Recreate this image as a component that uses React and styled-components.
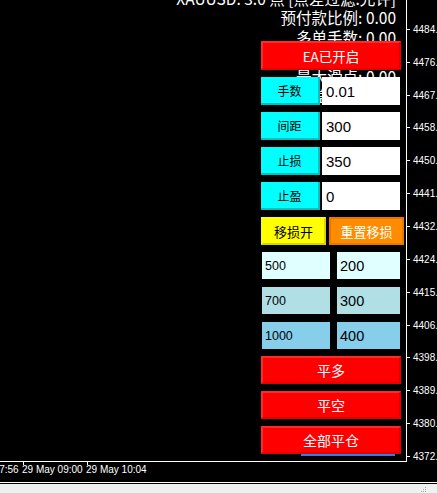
import React from "react";
import styled, { createGlobalStyle } from "styled-components";

const GlobalStyle = createGlobalStyle`
  html, body { margin: 0; padding: 0; background: #000; }
  body {
    width: 437px; height: 493px; overflow: hidden;
    font-family: "Liberation Sans", Arial, sans-serif;
  }
  * { box-sizing: border-box; }
`;

const Screen = styled.div`
  width: 437px;
  height: 493px;
  display: flex;
  flex-direction: column;
  background: #000;
`;

const Chart = styled.div`
  height: 482px;
  display: grid;
  grid-template-columns: 407px 30px;
  grid-template-rows: 462px 20px;
`;

const Plot = styled.div`
  position: relative;
  overflow: hidden;
  border-right: 1px solid #fff;
  border-bottom: 1px solid #fff;
`;

const Info = styled.div`
  display: flex;
  flex-direction: column;
  align-items: flex-end;
  margin-top: -11.5px;
  padding-right: 10px;
  font-family: "Noto Sans CJK SC", sans-serif;
  font-size: 15.5px;
  line-height: 19.5px;
  color: #fff;
  white-space: nowrap;
`;

const PriceLine = styled.div`
  position: absolute;
  left: 301px;
  top: 454px;
  width: 94px;
  height: 2px;
  background: #2a80f0;
`;

const Panel = styled.div`
  position: absolute;
  left: 261px;
  top: 41px;
  width: 143px;
  display: flex;
  flex-direction: column;
  gap: 7px;
  font-family: "Noto Sans CJK SC", sans-serif;
`;

const Button = styled.div`
  flex: none;
  width: ${(p) => p.$w || 140}px;
  height: ${(p) => p.$h || 28}px;
  background: ${(p) => p.$bg};
  color: ${(p) => p.$fg || "#fff"};
  font-size: ${(p) => p.$fs || 14}px;
  display: flex;
  align-items: center;
  justify-content: center;
  border-style: solid;
  border-width: 2px;
  border-color: ${(p) => p.$lt} ${(p) => p.$dk} ${(p) => p.$dk} ${(p) => p.$lt};
  white-space: nowrap;
`;

const FieldRow = styled.div`
  display: flex;
  gap: 2px;
  height: 28px;
`;

const FieldLabel = styled.div`
  width: 59px;
  background: #00ffff;
  border-right: 2px solid #00c2c2;
  border-bottom: 2px solid #00c2c2;
  color: #000;
  font-size: 12px;
  display: flex;
  align-items: center;
  justify-content: center;
`;

const FieldInput = styled.div`
  width: 78px;
  background: #fff;
  color: #000;
  font-family: "Liberation Sans", Arial, sans-serif;
  font-size: 15px;
  padding-left: 4px;
  display: flex;
  align-items: center;
`;

const ButtonRow = styled.div`
  display: flex;
  gap: 3px;
`;

const PresetGroup = styled.div`
  display: flex;
  flex-direction: column;
  gap: 8px;
  padding-left: 1px;
`;

const PresetRow = styled.div`
  display: flex;
  gap: 7px;
  height: 27px;
`;

const Preset = styled.div`
  width: ${(p) => p.$w}px;
  background: ${(p) => p.$bg};
  color: #000;
  font-family: "Liberation Sans", Arial, sans-serif;
  font-size: ${(p) => p.$fs}px;
  padding-left: 3px;
  display: flex;
  align-items: center;
`;

const CloseGroup = styled.div`
  display: flex;
  flex-direction: column;
  gap: 7px;
`;

const PriceAxis = styled.div`
  grid-row: 1 / 3;
  grid-column: 2;
  display: flex;
  flex-direction: column;
  padding-top: 12.9px;
  overflow: hidden;
`;

const PriceTick = styled.div`
  flex: none;
  height: 32.87px;
  display: flex;
  align-items: center;
  gap: 3px;
  font-size: 10px;
  color: #fff;
  white-space: nowrap;
  &::before {
    content: "";
    flex: none;
    width: 3px;
    height: 1px;
    background: #fff;
  }
`;

const TimeAxis = styled.div`
  grid-row: 2;
  grid-column: 1;
  display: flex;
  overflow: hidden;
  padding-top: 2px;
`;

const TimeItem = styled.div`
  flex: none;
  width: 64px;
  position: relative;
  font-size: 10px;
  line-height: 12px;
  color: #fff;
  white-space: nowrap;
  &:first-child { margin-left: -42px; }
  &::before {
    content: "";
    position: absolute;
    left: 1px;
    top: -2px;
    width: 1px;
    height: 3px;
    background: #fff;
  }
`;

const Divider = styled.div`
  height: 2px;
  border-top: 1px solid #fff;
  background: #000;
`;

const StatusBar = styled.div`
  flex: 1;
  background: #f0f0f0;
  display: flex;
  justify-content: flex-end;
  align-items: flex-end;
  padding-right: 10px;
`;

const Grip = () => (
  <svg width="6" height="6" viewBox="0 0 6 6">
    <rect x="4" y="0" width="1" height="1" fill="#a8a8a8" />
    <rect x="2" y="2" width="1" height="1" fill="#a8a8a8" />
    <rect x="4" y="2" width="1" height="1" fill="#a8a8a8" />
    <rect x="0" y="4" width="1" height="1" fill="#a8a8a8" />
    <rect x="2" y="4" width="1" height="1" fill="#a8a8a8" />
    <rect x="4" y="4" width="1" height="1" fill="#a8a8a8" />
  </svg>
);

const infoLines = [
  "XAUUSD: 3.0 点 [点差过滤:允许]",
  "预付款比例: 0.00",
  "多单手数: 0.00",
  "空单手数: 0.00",
  "最大滑点: 0.00",
  "点差限制: 0.00",
];

const fields = [
  ["手数", "0.01"],
  ["间距", "300"],
  ["止损", "350"],
  ["止盈", "0"],
];

const presets = [
  ["500", "200", "#e0ffff"],
  ["700", "300", "#b0e0e6"],
  ["1000", "400", "#87ceeb"],
];

const prices = [
  "4484.8", "4476.3", "4467.6", "4458.8", "4450.3", "4441.6", "4432.8",
  "4424.3", "4415.6", "4406.8", "4398.3", "4389.6", "4380.8", "4372.3",
];

const times = ["29 May 07:56", "29 May 09:00", "29 May 10:04"];

const red = { $bg: "#ff0000", $lt: "#ff2a2a", $dk: "#e60000" };

export default function App() {
  return (
    <>
      <GlobalStyle />
      <Screen>
        <Chart>
          <Plot>
            <Info>
              {infoLines.map((l) => (
                <div key={l}>{l}</div>
              ))}
            </Info>
            <PriceLine />
            <Panel>
              <Button {...red} $h={29} $fs={13.5}>EA已开启</Button>
              {fields.map(([k, v]) => (
                <FieldRow key={k}>
                  <FieldLabel>{k}</FieldLabel>
                  <FieldInput>{v}</FieldInput>
                </FieldRow>
              ))}
              <ButtonRow>
                <Button $w={65} $bg="#ffff00" $lt="#ffff00" $dk="#d4d400" $fg="#000" $fs={13}>
                  移损开
                </Button>
                <Button $w={75} $bg="#ff8c00" $lt="#e87800" $dk="#e87800" $fs={13}>
                  重置移损
                </Button>
              </ButtonRow>
              <PresetGroup>
                {presets.map(([a, b, bg]) => (
                  <PresetRow key={a}>
                    <Preset $w={68} $bg={bg} $fs={12.5}>{a}</Preset>
                    <Preset $w={63} $bg={bg} $fs={14.5}>{b}</Preset>
                  </PresetRow>
                ))}
              </PresetGroup>
              <CloseGroup>
                <Button {...red}>平多</Button>
                <Button {...red}>平空</Button>
                <Button {...red}>全部平仓</Button>
              </CloseGroup>
            </Panel>
          </Plot>
          <PriceAxis>
            {prices.map((p) => (
              <PriceTick key={p}>{p}</PriceTick>
            ))}
          </PriceAxis>
          <TimeAxis>
            {times.map((t) => (
              <TimeItem key={t}>{t}</TimeItem>
            ))}
          </TimeAxis>
        </Chart>
        <Divider />
        <StatusBar>
          <Grip />
        </StatusBar>
      </Screen>
    </>
  );
}
